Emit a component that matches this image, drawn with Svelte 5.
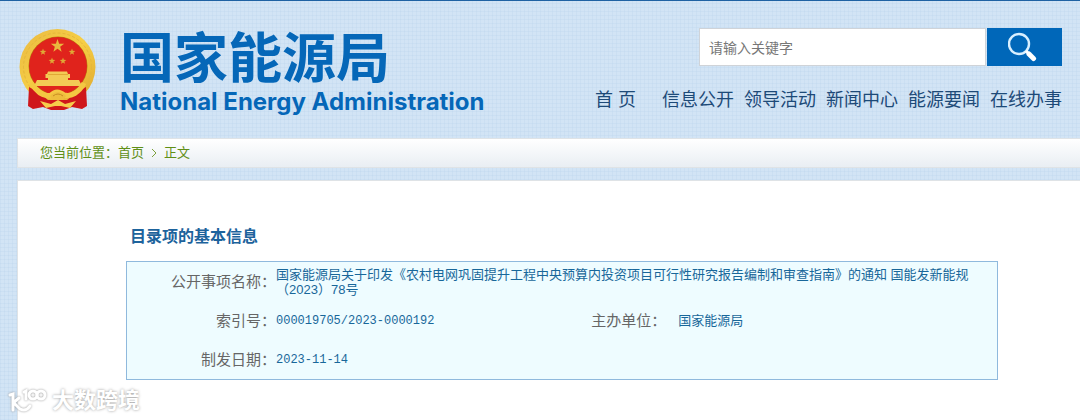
<script>
  const links = ['信息公开', '领导活动', '新闻中心', '能源要闻', '在线办事'];
  const smallStars = [[33, 32], [62, 32], [42, 41], [53, 41]];
  let keyword = '';

  // five-pointed star around a centre
  const star = (cx, cy, r) => {
    let points = [];
    for (let i = 0; i < 10; i++) {
      const radius = i % 2 ? r * 0.4 : r;
      const angle = (Math.PI / 5) * i - Math.PI / 2;
      points.push(`${cx + radius * Math.cos(angle)},${cy + radius * Math.sin(angle)}`);
    }
    return points.join(' ');
  }
</script>

<div class="page">
  <header>
    <div class="brand">
      <svg class="emblem" viewBox="8 8 80 84" aria-hidden="true">
        <defs>
          <linearGradient id="gold" x1="0" y1="0" x2="1" y2="1">
            <stop offset="0" stop-color="#e9b942" />
            <stop offset="0.5" stop-color="#f7cf45" />
            <stop offset="1" stop-color="#dda52c" />
          </linearGradient>
        </defs>
        <circle cx="47.5" cy="47" r="38" fill="url(#gold)" />
        <circle cx="47.5" cy="47" r="34" fill="none" stroke="#e6b63a" stroke-width="1" stroke-dasharray="3 2" />
        <circle cx="48" cy="46" r="29.5" fill="#b8860f" />
        <circle cx="48" cy="46" r="29" fill="#e0231c" />
        <polygon points={star(47.5, 26, 7)} fill="#e9b83e" />
        {#each smallStars as [x, y]}
          <polygon points={star(x, y, 3.5)} fill="#e0a836" />
        {/each}
        <path d="M38 51.5 H57 L58 54 H60 V58 H58 V60 H69 L72 66 H24 L27 60 H38 V58 H35.5 V54 H37 Z" fill="#f3cb55" />
        <path d="M38 54.5 H58" stroke="#d89b28" stroke-width="0.7" />
        <path d="M19 67 L28 72 L38 80 H57 L67 72 L76 67 L77 86 L72 89 L62 87 L54 90 H41 L33 87 L23 89 L18 86 Z" fill="#cf171b" />
        <path d="M21 63 C28 74 35 77 41 75 Q47 69 54 75 C61 77 69 73 74 63" fill="none" stroke="#f4c842" stroke-width="5" />
        <path d="M40 76 Q48 68 56 76 L53 80 H43 Z" fill="#eebd3d" />
        <path d="M30 81 L41 84 L48 80 L55 84 L66 81 L60 88 L51 86 H45 L36 88 Z" fill="#f6cd4b" />
        <path d="M43 76 Q48 72 53 76" fill="none" stroke="#c98c22" stroke-width="1" />
      </svg>
      <div class="names">
        <h1>国家能源局</h1>
        <p>National Energy Administration</p>
      </div>
    </div>

    <div class="tools">
      <form on:submit|preventDefault>
        <input type="text" placeholder="请输入关键字" aria-label="请输入关键字" bind:value={keyword}>
        <button aria-label="搜索">
          <svg viewBox="0 0 30 30" aria-hidden="true">
            <circle cx="11" cy="12" r="10" fill="none" stroke="#d8efff" stroke-width="2.4" />
            <path d="M18 19 L21 22" stroke="#fff" stroke-width="3" />
            <path d="M21 22 L25.5 26.5" stroke="#fff" stroke-width="5" stroke-linecap="round" />
          </svg>
        </button>
      </form>
      <nav>
        <a class="home" href="#home">首 页</a>
        {#each links as link}
          <a href="#{link}">{link}</a>
        {/each}
      </nav>
    </div>
  </header>

  <div class="crumbs">
    您当前位置：<a href="#home">首页</a>
    <svg viewBox="0 0 6 10" aria-hidden="true"><path d="M1 1 L5 5 L1 9" fill="none" stroke="#7da03c" /></svg>
    <span>正文</span>
  </div>

  <main>
    <h2>目录项的基本信息</h2>
    <table>
      <colgroup>
        <col class="label">
        <col class="value">
        <col class="label-short">
        <col>
      </colgroup>
      <tbody>
        <tr>
          <th scope="row">公开事项名称：</th>
          <td class="title" colspan="3">国家能源局关于印发《农村电网巩固提升工程中央预算内投资项目可行性研究报告编制和审查指南》的通知 国能发新能规（2023）78号</td>
        </tr>
        <tr>
          <th scope="row">索引号：</th>
          <td class="code">000019705/2023-0000192</td>
          <th scope="row">主办单位：</th>
          <td class="office">国家能源局</td>
        </tr>
        <tr>
          <th scope="row">制发日期：</th>
          <td class="code" colspan="3">2023-11-14</td>
        </tr>
      </tbody>
    </table>
  </main>

  <div class="watermark">
    <svg viewBox="0 0 40 28" aria-hidden="true">
      <g fill="none" stroke="#fff" stroke-width="3" stroke-linecap="round">
        <path d="M2 8 L5 7 V23 M5 16 L11 11 M6 16 L12 22 Q18 25 22 19" />
        <path d="M16 5 L18 4 V12" />
        <circle cx="25" cy="8" r="4" />
        <circle cx="33" cy="8" r="4" />
      </g>
    </svg>
    <span>大数跨境</span>
  </div>
</div>

<style>
  :global(body) {
    margin: 0;
    font-family: "Liberation Sans", "Noto Sans CJK SC", sans-serif;
  }

  .page {
    position: relative;
    display: flex;
    flex-direction: column;
    box-sizing: border-box;
    min-height: 100vh;
    border-top: 1px solid #1f62a3;
    overflow: hidden;
    background-color: #d2e4f5;
    background-image:
      repeating-linear-gradient(0deg, rgba(175, 205, 232, 0.2) 0 1px, transparent 1px 4px),
      repeating-linear-gradient(90deg, rgba(175, 205, 232, 0.2) 0 1px, transparent 1px 4px);
  }

  header {
    display: flex;
    justify-content: space-between;
    padding: 27px 18px 0;
  }

  a {
    color: inherit;
    text-decoration: none;
  }

  .brand {
    display: flex;
    gap: 22px;
    color: #0567b8;
  }

  .emblem {
    width: 80px;
    height: 84px;
  }

  h1 {
    margin: 0;
    font-size: 54px;
    line-height: 62px;
    font-weight: 700;
  }

  .names p {
    margin: 0;
    font-family: Inter, sans-serif;
    font-size: 24px;
    line-height: 24px;
    font-weight: 700;
  }

  form {
    display: flex;
    justify-content: flex-end;
    gap: 1px;
  }

  input {
    box-sizing: border-box;
    width: 287px;
    height: 38px;
    padding: 0 9px;
    border: 1px solid #cfd3d8;
    background: #fff;
    font: 14px "Noto Sans CJK SC", sans-serif;
  }

  input::placeholder {
    color: #777;
  }

  button {
    width: 75px;
    height: 38px;
    padding: 0;
    border: 0;
    background: #0067b9;
  }

  button svg {
    width: 30px;
    height: 30px;
    margin-right: 4px;
    vertical-align: middle;
  }

  nav {
    display: flex;
    justify-content: flex-end;
    gap: 10px;
    margin-top: 22px;
    font-size: 18px;
    line-height: 24px;
    color: #1d4a78;
  }

  .home {
    margin-right: 16px;
  }

  .crumbs {
    display: flex;
    align-items: center;
    margin: 24px 0 12px 17px;
    padding-left: 22px;
    border: 1px solid #dfe3e6;
    border-right: 0;
    background: linear-gradient(#fff, #e9eef3);
    font-size: 13px;
    line-height: 28px;
    color: #5f8f16;
  }

  .crumbs svg {
    width: 6px;
    height: 10px;
    margin: 0 7px;
  }

  main {
    flex: 1;
    margin-left: 17px;
    padding: 44px 82px 39px 108px;
    border: 1px solid #dfe3e6;
    border-width: 1px 0 0 1px;
    background: #fff;
  }

  h2 {
    margin: 0 0 12px 4px;
    font-size: 16px;
    line-height: 24px;
    color: #1d639c;
  }

  table {
    width: 100%;
    table-layout: fixed;
    border: 1px solid #8fb9dd;
    border-spacing: 0;
    background: #eefcff;
    font-size: 13px;
    line-height: 15px;
    color: #18679a;
  }

  .label {
    width: 149px;
  }

  .value {
    width: 36%;
  }

  .label-short {
    width: 77px;
  }

  th, td {
    height: 39px;
    padding: 0;
    text-align: left;
  }

  th {
    font-size: 15px;
    font-weight: 400;
    text-align: right;
    color: #666;
  }

  .title {
    padding-right: 20px;
  }

  .code {
    padding-top: 2px;
    height: 37px;
    font-family: "Liberation Mono", monospace;
    font-size: 12px;
  }

  .office {
    padding-left: 12px;
  }

  .watermark {
    position: absolute;
    left: 8px;
    bottom: 4px;
    display: flex;
    align-items: center;
    gap: 4px;
    font-size: 22px;
    line-height: 30px;
    font-weight: 700;
    color: #fff;
    text-shadow: 0 0 3px #999;
  }

  .watermark svg {
    width: 40px;
    height: 28px;
    filter: drop-shadow(0 0 1px #999);
  }
</style>
